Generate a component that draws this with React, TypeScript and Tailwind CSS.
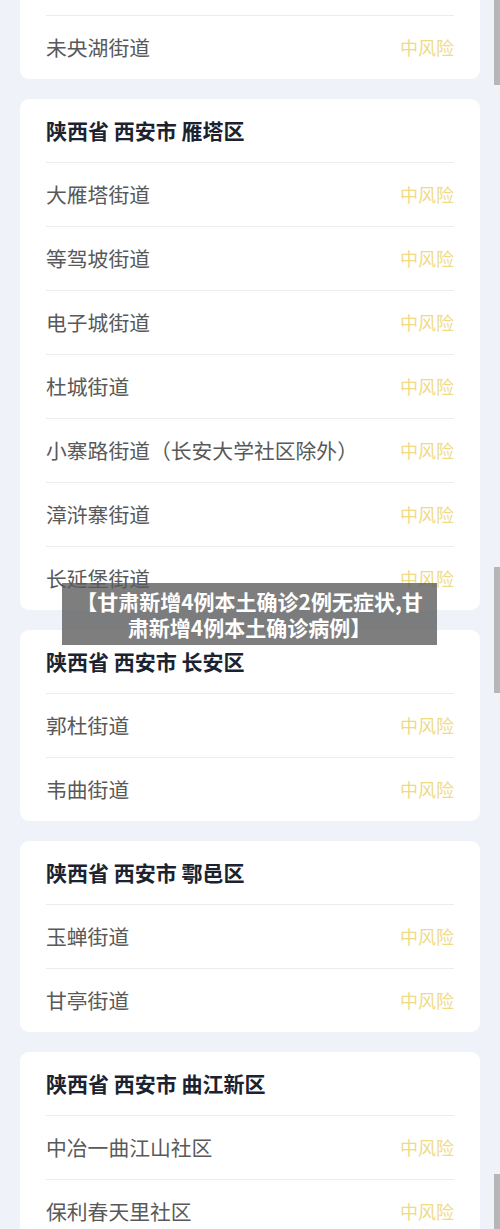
import React from "react";

type Card = { title?: string; rows: string[]; clipped?: boolean };

const cards: Card[] = [
  { clipped: true, rows: ["", "未央湖街道"] },
  {
    title: "陕西省 西安市 雁塔区",
    rows: ["大雁塔街道", "等驾坡街道", "电子城街道", "杜城街道", "小寨路街道（长安大学社区除外）", "漳浒寨街道", "长延堡街道"],
  },
  { title: "陕西省 西安市 长安区", rows: ["郭杜街道", "韦曲街道"] },
  { title: "陕西省 西安市 鄠邑区", rows: ["玉蝉街道", "甘亭街道"] },
  { title: "陕西省 西安市 曲江新区", rows: ["中冶一曲江山社区", "保利春天里社区"] },
];

function Row({ name, first }: { name: string; first: boolean }) {
  return (
    <div className={first ? "" : "border-t border-[#ececec]"}>
      <div className="flex h-[63px] items-center justify-between">
        <span className="text-[20.8px] text-[#595959]">{name}</span>
        {name && <span className="text-[18px] text-[#efdb86]">中风险</span>}
      </div>
    </div>
  );
}

export default function App() {
  return (
    <div
      className="relative h-[1229px] w-[500px] overflow-hidden bg-[#eff3f9]"
      style={{ fontFamily: '"Noto Sans CJK SC", "Noto Sans", sans-serif' }}
    >
      <div className="mt-[-48px] flex flex-col gap-[20px] pl-[20px] pr-[20px]">
        {cards.map((c, i) => (
          <div key={i} className="rounded-[9px] bg-white px-[26px]">
            {c.title && (
              <div className="flex h-[63px] items-center text-[21px] font-bold text-[#1b2230]">{c.title}</div>
            )}
            {c.rows.map((r, j) => (
              <Row key={j} name={r} first={!c.title && j === 0} />
            ))}
          </div>
        ))}
      </div>

      {/* scrollbar fragments */}
      <div className="absolute right-0 top-0 h-[85px] w-[6px] bg-[#b6b6b6]" />
      <div className="absolute right-0 top-[567px] h-[126px] w-[6px] bg-[#b6b6b6]" />
      <div className="absolute right-0 top-[1174px] h-[55px] w-[6px] bg-[#b6b6b6]" />

      {/* title overlay */}
      <div className="absolute left-[62px] top-[583px] flex h-[62px] w-[375px] flex-col items-center justify-center bg-[rgba(90,90,90,0.78)] text-center text-[21px] font-bold leading-[26px] text-white">
        <div>【甘肃新增4例本土确诊2例无症状,甘</div>
        <div>肃新增4例本土确诊病例】</div>
      </div>
    </div>
  );
}
